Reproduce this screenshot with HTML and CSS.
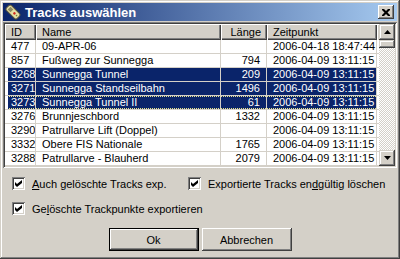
FILE: index.html
```html
<!DOCTYPE html>
<html>
<head>
    <title>Tracks auswählen</title>
    <link rel="stylesheet" href="styles.css">
</head>
<body>
    <div class="window">
        <div class="titlebar">
            <svg class="app-icon" width="16" height="16" viewBox="0 0 16 16">
                <g transform="rotate(-45 8 8)">
                    <rect x="4.5" y="0.5" width="7" height="15" rx="2" fill="#e6dfa4" stroke="#5a5640"/>
                    <rect x="6" y="2.5" width="4" height="4" fill="#8c8a62"/>
                    <circle cx="8" cy="10" r="1.3" fill="#d22a1e"/>
                    <circle cx="8" cy="13" r="0.8" fill="#6a8a3a"/>
                </g>
            </svg>
            <span class="title">Tracks auswählen</span>
            <div class="close">
                <svg width="8" height="7" viewBox="0 0 8 7">
                    <path d="M0 0h2l2 2 2-2h2v1l-2.5 2.5 2.5 2.5v1h-2l-2-2-2 2h-2v-1l2.5-2.5-2.5-2.5z" fill="#000"/>
                </svg>
            </div>
        </div>

        <div class="list">
            <div class="list-main">
                <table class="tracks">
                    <colgroup>
                        <col class="w-id">
                        <col class="w-name">
                        <col class="w-len">
                        <col class="w-time">
                        <col>
                    </colgroup>
                    <thead>
                        <tr>
                            <th>ID</th>
                            <th>Name</th>
                            <th class="num">Länge</th>
                            <th>Zeitpunkt</th>
                            <th class="fill"></th>
                        </tr>
                    </thead>
                    <tbody>
                        <tr><td class="id">477</td><td>09-APR-06</td><td class="num"></td><td>2006-04-18 18:47:44</td><td class="fill"></td></tr>
                        <tr><td class="id">857</td><td>Fußweg zur Sunnegga</td><td class="num">794</td><td>2006-04-09 13:11:15</td><td class="fill"></td></tr>
                        <tr class="sel"><td class="id">3268</td><td>Sunnegga Tunnel</td><td class="num">209</td><td>2006-04-09 13:11:15</td><td class="fill"></td></tr>
                        <tr class="sel"><td class="id">3271</td><td>Sunnegga Standseilbahn</td><td class="num">1496</td><td>2006-04-09 13:11:15</td><td class="fill"></td></tr>
                        <tr class="sel focus"><td class="id">3273</td><td>Sunnegga Tunnel II</td><td class="num">61</td><td>2006-04-09 13:11:15</td><td class="fill"></td></tr>
                        <tr><td class="id">3276</td><td>Brunnjeschbord</td><td class="num">1332</td><td>2006-04-09 13:11:15</td><td class="fill"></td></tr>
                        <tr><td class="id">3290</td><td>Patrullarve Lift (Doppel)</td><td class="num"></td><td>2006-04-09 13:11:15</td><td class="fill"></td></tr>
                        <tr><td class="id">3332</td><td>Obere FIS Nationale</td><td class="num">1765</td><td>2006-04-09 13:11:15</td><td class="fill"></td></tr>
                        <tr><td class="id">3288</td><td>Patrullarve - Blauherd</td><td class="num">2079</td><td>2006-04-09 13:11:15</td><td class="fill"></td></tr>
                    </tbody>
                </table>
            </div>
            <div class="vscroll">
                <div class="sb-btn">
                    <svg width="7" height="4" viewBox="0 0 7 4"><path d="M3.5 0L7 4H0z" fill="#000"/></svg>
                </div>
                <div class="sb-thumb"></div>
                <div class="sb-track"></div>
                <div class="sb-btn">
                    <svg width="7" height="4" viewBox="0 0 7 4"><path d="M0 0h7L3.5 4z" fill="#000"/></svg>
                </div>
            </div>
        </div>

        <div class="options">
            <div class="option-row two">
                <label class="check">
                    <span class="box"><svg width="7" height="7" viewBox="0 0 7 7"><path d="M0 2l2 2 5-4v3l-5 4-2-2z" fill="#000"/></svg></span>
                    <span><u>A</u>uch gelöschte Tracks exp.</span>
                </label>
                <label class="check">
                    <span class="box"><svg width="7" height="7" viewBox="0 0 7 7"><path d="M0 2l2 2 5-4v3l-5 4-2-2z" fill="#000"/></svg></span>
                    <span>Exportierte Tracks en<u>d</u>gültig löschen</span>
                </label>
            </div>
            <div class="option-row">
                <label class="check">
                    <span class="box"><svg width="7" height="7" viewBox="0 0 7 7"><path d="M0 2l2 2 5-4v3l-5 4-2-2z" fill="#000"/></svg></span>
                    <span>Ge<u>l</u>öschte Trackpunkte exportieren</span>
                </label>
            </div>
        </div>

        <div class="actions">
            <button class="btn default">Ok</button>
            <button class="btn">Abbrechen</button>
        </div>
    </div>
</body>
</html>
```

FILE: styles.css
```css
body {
    margin: 0;
    font-family: "Liberation Sans", Arial, sans-serif;
    font-size: 11px;
    color: #000;
    background: #d4d0c8;
}
.window {
    width: 400px;
    height: 259px;
    box-sizing: border-box;
    padding: 3px;
    background: #d4d0c8;
    box-shadow: inset -1px -1px #404040, inset 1px 1px #d4d0c8,
                inset -2px -2px #808080, inset 2px 2px #fff;
    display: flex;
    flex-direction: column;
}
.titlebar {
    height: 18px;
    display: flex;
    align-items: center;
    padding: 0 3px 0 2px;
    background: linear-gradient(to right, #0a246a, #a6caf0);
}
.app-icon {
    flex: none;
    margin-right: 4px;
}
.title {
    color: #fff;
    font-weight: bold;
    font-size: 13px;
    flex: 1;
}
.close {
    width: 16px;
    height: 14px;
    display: flex;
    align-items: center;
    justify-content: center;
    background: #d4d0c8;
    box-shadow: inset -1px -1px #404040, inset 1px 1px #fff,
                inset -2px -2px #808080;
}
.list {
    margin-top: 1px;
    height: 146px;
    box-sizing: border-box;
    padding: 2px;
    background: #fff;
    display: flex;
    box-shadow: inset 1px 1px #808080, inset -1px -1px #fff,
                inset 2px 2px #404040, inset -2px -2px #d4d0c8;
}
.list-main {
    flex: 1;
    overflow: hidden;
}
.tracks {
    width: 100%;
    table-layout: fixed;
    border-collapse: separate;
    border-spacing: 0;
}
.w-id { width: 31px; }
.w-name { width: 185px; }
.w-len { width: 46px; }
.w-time { width: 110px; }
.tracks th {
    height: 16px;
    padding: 0 6px;
    font-weight: normal;
    text-align: left;
    white-space: nowrap;
    background: #d4d0c8;
    box-shadow: inset 1px 1px #fff, inset -1px -1px #404040,
                inset -2px -2px #808080;
}
.tracks th.fill {
    box-shadow: inset 1px 1px #fff;
}
.tracks td {
    height: 13px;
    line-height: 13px;
    padding: 0 6px;
    white-space: nowrap;
    overflow: hidden;
    border-right: 1px solid #d4d0c8;
    border-bottom: 1px solid #d4d0c8;
}
.tracks td.fill {
    border-right: none;
}
.tracks .num {
    text-align: right;
}
.tracks tr.sel td {
    background: #0a246a;
    color: #fff;
}
.tracks tr.sel td.id {
    box-shadow: inset 3px 0 #fff;
}
.tracks tr.sel td.fill {
    background: #fff;
}
.tracks tr.focus td {
    background-image: linear-gradient(to right, #e8e48c 50%, transparent 50%),
                      linear-gradient(to right, #e8e48c 50%, transparent 50%);
    background-size: 2px 1px;
    background-repeat: repeat-x;
    background-position: 0 0, 0 100%;
}
.tracks tr.focus td.fill {
    background-image: none;
}
.vscroll {
    width: 16px;
    display: flex;
    flex-direction: column;
}
.sb-btn {
    height: 16px;
    display: flex;
    align-items: center;
    justify-content: center;
    background: #d4d0c8;
    box-shadow: inset -1px -1px #404040, inset 1px 1px #d4d0c8,
                inset -2px -2px #808080, inset 2px 2px #fff;
}
.sb-thumb {
    height: 8px;
    background: #d4d0c8;
    box-shadow: inset -1px -1px #404040, inset 1px 1px #d4d0c8,
                inset -2px -2px #808080, inset 2px 2px #fff;
}
.sb-track {
    flex: 1;
    background: repeating-conic-gradient(#fff 0 25%, #d4d0c8 0 50%) 0 0 / 2px 2px;
}
.options {
    padding-left: 9px;
}
.option-row {
    display: flex;
    height: 13px;
    margin-top: 12px;
}
.option-row.two {
    margin-top: 9px;
    display: grid;
    grid-template-columns: 176px auto;
}
.check {
    display: flex;
    align-items: center;
    gap: 7px;
}
.box {
    width: 13px;
    height: 13px;
    box-sizing: border-box;
    flex: none;
    display: flex;
    align-items: center;
    justify-content: center;
    background: #fff;
    box-shadow: inset 1px 1px #808080, inset -1px -1px #fff,
                inset 2px 2px #404040, inset -2px -2px #d4d0c8;
}
.actions {
    display: flex;
    justify-content: center;
    gap: 3px;
    margin-top: 13px;
}
.btn {
    width: 90px;
    height: 23px;
    font-family: inherit;
    font-size: 11px;
    border: none;
    padding: 0;
    background: #d4d0c8;
    box-shadow: inset -1px -1px #404040, inset 1px 1px #fff,
                inset -2px -2px #808080, inset 2px 2px #d4d0c8;
}
.btn.default {
    box-shadow: inset 0 0 0 1px #000, inset -2px -2px #404040, inset 2px 2px #fff,
                inset -3px -3px #808080;
}
```
